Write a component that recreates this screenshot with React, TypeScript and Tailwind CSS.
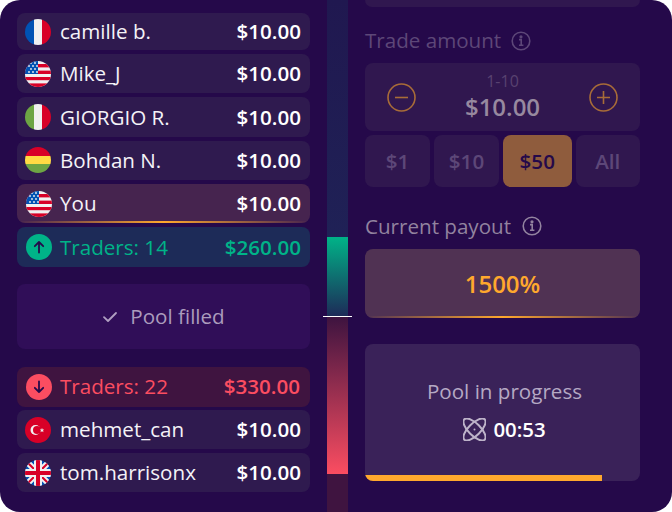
import React from "react";

const Clip = ({ id, children }: { id: string; children: React.ReactNode }) => (
  <svg width="26" height="26" viewBox="0 0 26 26" className="shrink-0">
    <defs>
      <clipPath id={id}>
        <circle cx="13" cy="13" r="13" />
      </clipPath>
    </defs>
    <g clipPath={`url(#${id})`}>{children}</g>
  </svg>
);

const France = () => (
  <Clip id="fr">
    <rect width="9" height="26" fill="#0052b4" />
    <rect x="9" width="8" height="26" fill="#f0f0f0" />
    <rect x="17" width="9" height="26" fill="#d80027" />
  </Clip>
);
const Italy = () => (
  <Clip id="it">
    <rect width="9" height="26" fill="#6da544" />
    <rect x="9" width="8" height="26" fill="#f0f0f0" />
    <rect x="17" width="9" height="26" fill="#d80027" />
  </Clip>
);
const Bolivia = () => (
  <Clip id="bo">
    <rect width="26" height="9" fill="#d80027" />
    <rect y="9" width="26" height="8" fill="#ffda44" />
    <rect y="17" width="26" height="9" fill="#6da544" />
  </Clip>
);
const Usa = ({ id }: { id: string }) => (
  <Clip id={id}>
    <rect width="26" height="26" fill="#f0f0f0" />
    <rect y="3" width="26" height="3.4" fill="#d80027" />
    <rect y="9.6" width="26" height="3.4" fill="#d80027" />
    <rect y="16" width="26" height="3.2" fill="#d80027" />
    <rect y="22.4" width="26" height="3.6" fill="#d80027" />
    <rect width="13" height="13" fill="#0052b4" />
    {[[6,2],[10,2],[4,5],[8,5],[12,5],[6,8],[10,8],[4,11],[8,11],[12,11]].map(([x, y], i) => (
      <circle key={i} cx={x} cy={y} r="0.9" fill="#f0f0f0" />
    ))}
  </Clip>
);
const Turkey = () => (
  <Clip id="tr">
    <rect width="26" height="26" fill="#d80027" />
    <circle cx="10.5" cy="13" r="5" fill="#f0f0f0" />
    <circle cx="12" cy="13" r="4" fill="#d80027" />
    <polygon points="17,10.8 17.6,12.4 19.3,12.4 18,13.5 18.5,15.2 17,14.2 15.5,15.2 16,13.5 14.7,12.4 16.4,12.4" fill="#f0f0f0" />
  </Clip>
);
const Uk = () => (
  <Clip id="uk">
    <rect width="26" height="26" fill="#0052b4" />
    <path d="M0 0L26 26M26 0L0 26" stroke="#f0f0f0" strokeWidth="6" />
    <path d="M0 0L26 26M26 0L0 26" stroke="#d80027" strokeWidth="2" />
    <path d="M13 0V26M0 13H26" stroke="#f0f0f0" strokeWidth="8" />
    <path d="M13 0V26M0 13H26" stroke="#d80027" strokeWidth="4" />
  </Clip>
);

const Row = ({ flag, name, first }: { flag: React.ReactNode; name: string; first?: boolean }) => (
  <div className={`flex items-center justify-between rounded-lg bg-[#2f1a4f] pl-[8px] pr-[9px] ${first ? "h-[37.15px]" : "h-[39.33px]"}`}>
    <div className="flex items-center gap-[9px]">
      {flag}
      <span className="text-[20.6px] text-[#f4f2f7]">{name}</span>
    </div>
    <span className="text-[20.6px] font-semibold text-white">$10.00</span>
  </div>
);

const Info = ({ color }: { color: string }) => (
  <svg width="20" height="20" viewBox="0 0 20 20" fill="none" stroke={color} strokeWidth="1.6">
    <circle cx="10" cy="10" r="8.8" />
    <path d="M8 8.6H10.2V14M8 14.2H12.4" />
    <circle cx="10" cy="5.8" r="0.8" fill={color} />
  </svg>
);

const Atom = () => (
  <svg width="23" height="23" viewBox="0 0 23 23" fill="none" stroke="#bdb3c9" strokeWidth="2">
    <ellipse cx="11.5" cy="11.5" rx="14.4" ry="6" transform="rotate(45 11.5 11.5)" />
    <ellipse cx="11.5" cy="11.5" rx="14.4" ry="6" transform="rotate(-45 11.5 11.5)" />
    <circle cx="11.5" cy="11.5" r="1" fill="#bdb3c9" stroke="none" />
  </svg>
);

const Underline = () => (
  <div className="absolute bottom-0 left-0 right-0 h-[2px] bg-[linear-gradient(90deg,rgba(255,168,45,0),#ffa82d_50%,rgba(255,168,45,0))]" />
);

export default function App() {
  return (
    <div className="h-[512px] w-[672px] bg-white font-['Open_Sans',sans-serif]">
      <div className="flex h-full overflow-hidden rounded-[20px] bg-[#25094a]">
        <div className="ml-[17px] flex w-[293px] shrink-0 flex-col pt-[13px]">
          <div className="flex flex-col gap-[4px]">
            <Row first flag={<France />} name="camille b." />
            <Row flag={<Usa id="us1" />} name="Mike_J" />
            <Row flag={<Italy />} name="GIORGIO R." />
            <Row flag={<Bolivia />} name="Bohdan N." />
            <div className="relative flex h-[39.33px] items-center justify-between overflow-hidden rounded-lg bg-[#46244f] pl-[9px] pr-[9px]">
              <div className="flex items-center gap-[8px]">
                <Usa id="us2" />
                <span className="text-[20.6px] text-[#f4f2f7]">You</span>
              </div>
              <span className="text-[20.6px] font-semibold text-white">$10.00</span>
              <Underline />
            </div>
            <div className="flex h-[39.33px] items-center justify-between rounded-lg bg-[#1d2b58] pl-[9px] pr-[9px]">
              <div className="flex items-center gap-[8px]">
                <div className="flex h-[26px] w-[26px] items-center justify-center rounded-full bg-[#00b388]">
                  <svg width="14" height="14" viewBox="0 0 14 14" fill="none" stroke="#25094a" strokeWidth="1.8" strokeLinecap="round" strokeLinejoin="round">
                    <path d="M7 12.5V2M2.8 6.2L7 2L11.2 6.2" />
                  </svg>
                </div>
                <span className="text-[20.6px] text-[#00b388]">Traders: 14</span>
              </div>
              <span className="text-[20.6px] font-semibold text-[#00b388]">$260.00</span>
            </div>
          </div>
          <div className="mt-[17.35px] flex h-[65px] items-center justify-center gap-[12px] rounded-lg bg-[#300e58]">
            <svg width="16" height="12" viewBox="0 0 16 12" fill="none" stroke="#b0a0c2" strokeWidth="1.8" strokeLinecap="round" strokeLinejoin="round">
              <path d="M2 6.2L6 10L14 2" />
            </svg>
            <span className="text-[20.6px] text-[#ab9cbd]">Pool filled</span>
          </div>
          <div className="mt-[18px] flex flex-col gap-[3.5px]">
            <div className="flex h-[39.5px] items-center justify-between rounded-lg bg-[#3f1440] pl-[9px] pr-[10px]">
              <div className="flex items-center gap-[8px]">
                <div className="flex h-[26px] w-[26px] items-center justify-center rounded-full bg-[#fb4d61]">
                  <svg width="14" height="14" viewBox="0 0 14 14" fill="none" stroke="#25094a" strokeWidth="1.8" strokeLinecap="round" strokeLinejoin="round">
                    <path d="M7 1.5V12M2.8 7.8L7 12L11.2 7.8" />
                  </svg>
                </div>
                <span className="text-[20.6px] text-[#fb4d61]">Traders: 22</span>
              </div>
              <span className="text-[20.6px] font-semibold text-[#fb4d61]">$330.00</span>
            </div>
            <Row flag={<Turkey />} name="mehmet_can" />
            <Row flag={<Uk />} name="tom.harrisonx" />
          </div>
        </div>

        <div className="relative ml-[17px] flex h-full w-[21px] shrink-0 flex-col bg-[linear-gradient(180deg,#201850_0%,#1f2458_60%,#3f1440_62%,#3f1440_100%)]">
          <div className="mt-[237px] h-[79px] bg-[linear-gradient(180deg,#00b388,#1d2b58)]" />
          <div className="mt-[2px] h-[156px] bg-[linear-gradient(180deg,#3f1440,#fb4d61)]" />
          <div className="absolute left-[-4px] top-[315.5px] h-[1.5px] w-[29px] bg-white" />
        </div>

        <div className="ml-[17px] flex w-[275px] shrink-0 flex-col">
          <div className="h-[7px] rounded-b-lg bg-[#30174f]" />
          <div className="mt-[20.5px] flex h-[26px] items-center gap-[10px]">
            <span className="text-[20.6px] text-[#5d4778]">Trade amount</span>
            <Info color="#5d4778" />
          </div>
          <div className="mt-[9.5px] flex h-[68px] items-center justify-between rounded-lg bg-[#30174f] px-[22px]">
            <svg width="29" height="29" viewBox="0 0 29 29" fill="none" stroke="#a86c38" strokeWidth="1.6">
              <circle cx="14.5" cy="14.5" r="13.5" />
              <path d="M8 14.5H21" />
            </svg>
            <div className="flex flex-col items-center pt-[1px]">
              <span className="text-[16px] leading-[18px] text-[#584270]">1-10</span>
              <span className="mt-[1px] text-[24px] font-semibold leading-[32px] text-[#97899f]">$10.00</span>
            </div>
            <svg width="29" height="29" viewBox="0 0 29 29" fill="none" stroke="#a86c38" strokeWidth="1.6">
              <circle cx="14.5" cy="14.5" r="13.5" />
              <path d="M8 14.5H21M14.5 8V21" />
            </svg>
          </div>
          <div className="mt-[4px] flex h-[52px] gap-[4px] text-[20.6px] font-semibold">
            <div className="flex w-[65px] items-center justify-center rounded-lg bg-[#30174f] pt-[1px] text-[#5d4778]">$1</div>
            <div className="flex w-[65px] items-center justify-center rounded-lg bg-[#30174f] pt-[1px] text-[#5d4778]">$10</div>
            <div className="flex w-[68.5px] items-center justify-center rounded-lg bg-[#8f5c3d] pt-[1px] text-[#25094a]">$50</div>
            <div className="flex w-[64.5px] items-center justify-center rounded-lg bg-[#30174f] pt-[1px] text-[#5d4778]">All</div>
          </div>
          <div className="mt-[26px] flex h-[26px] items-center gap-[11px]">
            <span className="text-[20.6px] text-[#92839f]">Current payout</span>
            <Info color="#92839f" />
          </div>
          <div className="relative mt-[10px] flex h-[69px] items-center justify-center overflow-hidden rounded-lg bg-[#503253]">
            <span className="text-[24px] font-semibold text-[#ffa82d]">1500%</span>
            <Underline />
          </div>
          <div className="relative mt-[26px] flex h-[137px] flex-col items-center overflow-hidden rounded-lg bg-[#3a2259] pl-[4px] pt-[33px]">
            <span className="text-[20.6px] leading-[28px] text-[#b5a9c4]">Pool in progress</span>
            <div className="mt-[10px] flex items-center gap-[7px]">
              <Atom />
              <span className="text-[20.4px] font-semibold leading-[28px] text-white">00:53</span>
            </div>
            <div className="absolute bottom-0 left-0 h-[6px] w-[237px] bg-[#ffa82d]" />
          </div>
        </div>
      </div>
    </div>
  );
}
